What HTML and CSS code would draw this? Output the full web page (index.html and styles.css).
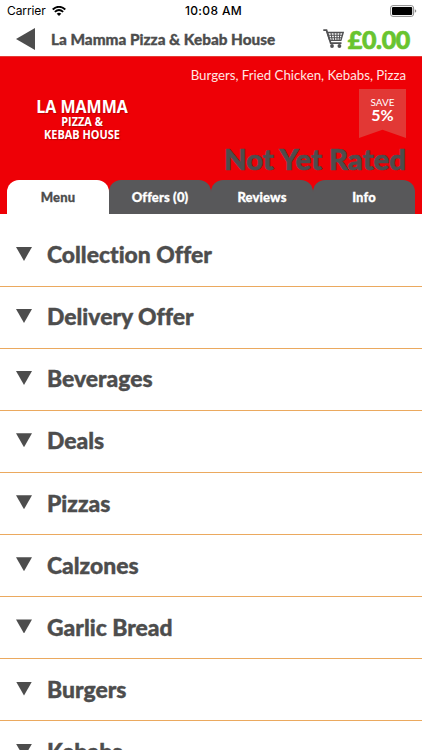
FILE: index.html
```html
<!DOCTYPE html>
<html lang="en">
<head>
<meta charset="utf-8">
<title>La Mamma Pizza &amp; Kebab House</title>
<link rel="stylesheet" href="styles.css">
</head>
<body>
<div class="screen">
  <div class="status">
    <div class="carrier"><span>Carrier</span>
      <svg class="wifi" viewBox="0 0 14 10"><path d="M.7 3.5Q7-2 13.3 3.5" fill="none" stroke="#000" stroke-width="1.8"/><path d="M2.8 5.8Q7 2.2 11.2 5.8" fill="none" stroke="#000" stroke-width="1.7"/><path d="M4.7 7.7Q7 5.8 9.3 7.7L7 10z"/></svg>
    </div>
    <time class="clock">10:08 AM</time>
    <svg class="battery" viewBox="0 0 27 12"><rect x=".6" y=".6" width="23" height="10.8" rx="2.4" fill="#fff" stroke="#8c8c8c"/><rect x="2" y="2" width="20.2" height="8" rx="1"/><path d="M24.8 4.2q1.5.5 1.5 1.8t-1.5 1.8z" fill="#8c8c8c"/></svg>
  </div>
  <header class="bar">
    <svg class="back" viewBox="0 0 19 22"><path d="M0 11 19 0v22z"/></svg>
    <h1 class="title">La Mamma Pizza &amp; Kebab House</h1>
    <svg class="cart" viewBox="0 0 21 20"><g fill="none" stroke="#505052"><path d="M.3 1.2h3.2l4.2 13h10.8" stroke-width="1.8"/><path d="M4.3 3.5h15.9l-2.3 7.9H6.8z" stroke-width="1.4"/><path d="M5 6.2h14.4M6 8.8h12.5M8 3.5l1.2 8M11 3.5l.6 8M14 3.5v8M17 3.5l-.9 8" stroke-width="1.1"/></g><circle cx="9" cy="17" r="1.9" fill="#505052"/><circle cx="16.4" cy="17" r="1.9" fill="#505052"/></svg>
    <span class="total">£0.00</span>
  </header>
  <section class="hero">
    <div class="logo"><span class="logo-name">LA MAMMA</span><span class="logo-mid">PIZZA &amp;</span><span class="logo-end">KEBAB HOUSE</span></div>
    <div class="details">
      <p class="cuisines">Burgers, Fried Chicken, Kebabs, Pizza</p>
      <div class="ribbon"><span>SAVE</span><b>5%</b></div>
      <p class="rating">Not Yet Rated</p>
    </div>
    <nav class="tabs"><a class="tab active">Menu</a><a class="tab">Offers (0)</a><a class="tab">Reviews</a><a class="tab">Info</a></nav>
  </section>
  <ul class="list">
    <li><i class="arrow"></i><span>Collection Offer</span></li>
    <li><i class="arrow"></i><span>Delivery Offer</span></li>
    <li><i class="arrow"></i><span>Beverages</span></li>
    <li><i class="arrow"></i><span>Deals</span></li>
    <li><i class="arrow"></i><span>Pizzas</span></li>
    <li><i class="arrow"></i><span>Calzones</span></li>
    <li><i class="arrow"></i><span>Garlic Bread</span></li>
    <li><i class="arrow"></i><span>Burgers</span></li>
    <li><i class="arrow"></i><span>Kebabs</span></li>
  </ul>
</div>
</body>
</html>
```
FILE: styles.css
```css
* { box-sizing: border-box; margin: 0; padding: 0; }
body { background: #fff; font-family: Lato, sans-serif; color: #4d4d4d; overflow: hidden; font-variant-ligatures: none; }
.screen { width: 422px; height: 750px; overflow: hidden; }
.status { height: 22px; display: grid; grid-template-columns: 1fr auto 1fr; align-items: center; padding: 0 5px 0 7px; font: 12px/22px Inter, sans-serif; color: #000; }
.carrier { display: flex; align-items: center; gap: 6px; letter-spacing: -.1px; }
.wifi { width: 14px; height: 10px; }
.clock { font-weight: 500; letter-spacing: .35px; padding-left: 3px; }
.battery { width: 27px; height: 12px; justify-self: end; }
.bar { height: 34px; display: flex; align-items: center; padding: 0 12px 0 16px; }
.back { width: 19px; height: 22px; fill: #4d4d4d; }
.title { margin-left: 16px; font-size: 15.3px; line-height: 34px; font-weight: 900; white-space: nowrap; -webkit-text-stroke: .3px; }
.cart { width: 21px; height: 20px; margin-left: auto; }
.total { margin-left: 4px; color: #69c42f; font-size: 25px; line-height: 34px; font-weight: 900; letter-spacing: -.35px; -webkit-text-stroke: .7px; }
.hero { height: 158px; background: #ee0006; display: grid; grid-template-columns: 164px 1fr; grid-template-rows: 123px 34px; border-top: 1px solid #e63b36; }
.logo { display: flex; flex-direction: column; align-items: center; padding-top: 37px; color: #fff; font-family: "Open Sans", sans-serif; font-weight: 700; white-space: nowrap; text-shadow: 1px 1px 1px #8008; transform: scaleX(.91); }
.logo-name { font-size: 17.6px; line-height: 24px; }
.logo-mid { font-size: 12px; line-height: 12px; margin-top: -2px; }
.logo-end { font-size: 12px; line-height: 13px; }
.details { display: flex; flex-direction: column; align-items: flex-end; padding: 10px 16px 0 0; }
.cuisines { height: 22px; font-size: 13.25px; line-height: 17px; color: #ffe6e3; white-space: nowrap; }
.ribbon { width: 47px; height: 49px; background: #e23835; clip-path: polygon(0 0, 100% 0, 100% 100%, 50% 83%, 0 100%); color: #fff; display: flex; flex-direction: column; align-items: center; padding-top: 7px; }
.ribbon span { font-size: 10px; line-height: 12px; }
.ribbon b { font-size: 16px; line-height: 14px; }
.rating { margin-top: 4px; font-size: 29.3px; line-height: 34px; font-weight: 900; white-space: nowrap; -webkit-text-stroke: .7px; }
.tabs { grid-column: 1 / 3; display: flex; margin: 0 7px 0 7px; }
.tab { flex: 1; height: 34px; border-radius: 12px 12px 0 0; background: #58585a; color: #fff; font-size: 13px; line-height: 34px; font-weight: 900; text-align: center; letter-spacing: .15px; -webkit-text-stroke: .3px; }
.tab.active { background: #fff; color: #4d4d4d; }
.list { list-style: none; padding-top: 10.6px; }
.list li { height: 62.1px; display: flex; align-items: center; padding-left: 16px; background: linear-gradient(#eba95f, #eba95f) bottom / 100% 1px no-repeat; }
.list span { margin: -3px 0 0 15px; font-size: 22.9px; line-height: 28px; font-weight: 900; -webkit-text-stroke: .4px; }
.arrow { width: 16px; height: 14px; margin-top: -3.5px; background: #4d4d4d; clip-path: polygon(0 0, 100% 0, 50% 100%); }
```
